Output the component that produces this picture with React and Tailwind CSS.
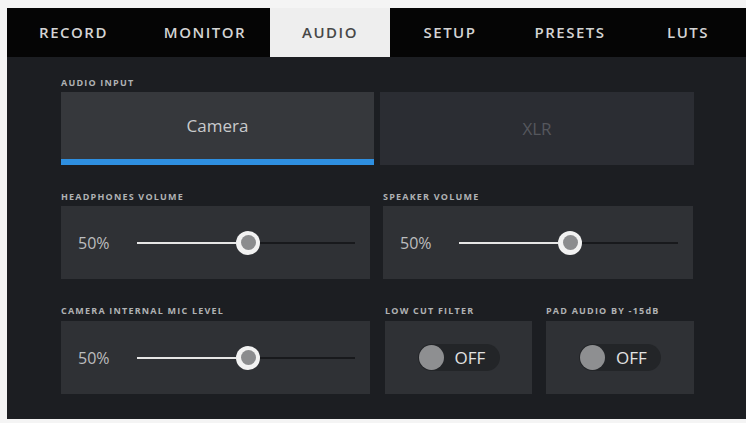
const font = { fontFamily: '"Open Sans", "Liberation Sans", sans-serif' };

const tabs = [
  { name: "RECORD", w: "w-[133px]" },
  { name: "MONITOR", w: "w-[130px]" },
  { name: "AUDIO", w: "w-[120px]", active: true },
  { name: "SETUP", w: "w-[120px]" },
  { name: "PRESETS", w: "w-[120px]" },
  { name: "LUTS", w: "w-[116px]" },
];

function Label({ children }) {
  return (
    <div className="h-[9px] text-[9px] leading-[9px] font-bold tracking-[1.2px] text-[#b0b2b4] whitespace-nowrap">
      {children}
    </div>
  );
}

function Slider({ value }) {
  return (
    <div className="h-[73px] bg-[#2f3135] flex items-center pl-[17px] pr-[15px]">
      <div className="w-[59px] text-[16px] text-[#bcbdbf]">{value}</div>
      <div className="flex-1 flex items-center">
        <div className="w-[99px] h-[2px] bg-[#e6e6e6]" />
        <div className="w-[24px] h-[24px] rounded-full bg-[#f2f2f2] flex items-center justify-center shrink-0">
          <div className="w-[15px] h-[15px] rounded-full bg-[#8b8c8e]" />
        </div>
        <div className="flex-1 h-[2px] bg-[#18191c]" />
      </div>
    </div>
  );
}

function Toggle() {
  return (
    <div className="h-[73px] bg-[#2f3135] flex items-center justify-center">
      <div className="w-[82px] h-[27px] rounded-full bg-[#232528] flex items-center pl-[1px]">
        <div className="w-[25px] h-[25px] rounded-full bg-[#8e8f91]" />
        <span className="ml-[11px] text-[17px] font-medium text-[#e2e2e2]">OFF</span>
      </div>
    </div>
  );
}

export default function App() {
  return (
    <div className="w-[746px] h-[423px] bg-[#f4f4f4] pt-[8px] pl-[7px] overflow-hidden" style={font}>
      <div className="w-[739px] h-[411px] bg-[#1c1e22]">
        {/* Tabs */}
        <div className="flex h-[49px] bg-[#050505]">
          {tabs.map((t) => (
            <div
              key={t.name}
              className={`${t.w} flex items-center justify-center text-[15px] font-semibold tracking-[1.5px] ${
                t.active ? "bg-[#eeeeee] text-[#474747]" : "text-[#d4d4d4]"
              }`}
            >
              {t.name}
            </div>
          ))}
        </div>

        <div className="pl-[54px] pt-[21px] w-[687px]">
          {/* Audio input */}
          <Label>AUDIO INPUT</Label>
          <div className="mt-[5px] flex gap-[6px]">
            <div className="w-[313px] h-[73px] flex flex-col">
              <div className="flex-1 bg-[#36383c] flex items-center justify-center text-[17px] text-[#c9cacc]">
                Camera
              </div>
              <div className="h-[6px] bg-[#2e8fe0]" />
            </div>
            <div className="w-[314px] h-[73px] bg-[#2b2d33] flex items-center justify-center text-[17px] text-[#55575d]">
              XLR
            </div>
          </div>

          {/* Volumes */}
          <div className="mt-[27px] flex gap-[13px]">
            <div className="w-[309px]">
              <Label>HEADPHONES VOLUME</Label>
              <div className="mt-[5px]">
                <Slider value="50%" />
              </div>
            </div>
            <div className="w-[310px]">
              <Label>SPEAKER VOLUME</Label>
              <div className="mt-[5px]">
                <Slider value="50%" />
              </div>
            </div>
          </div>

          {/* Mic level and filters */}
          <div className="mt-[27px] flex">
            <div className="w-[309px]">
              <Label>CAMERA INTERNAL MIC LEVEL</Label>
              <div className="mt-[6px]">
                <Slider value="50%" />
              </div>
            </div>
            <div className="w-[147px] ml-[15px]">
              <Label>LOW CUT FILTER</Label>
              <div className="mt-[6px]">
                <Toggle />
              </div>
            </div>
            <div className="w-[148px] ml-[14px]">
              <Label>PAD AUDIO BY -15dB</Label>
              <div className="mt-[6px]">
                <Toggle />
              </div>
            </div>
          </div>
        </div>
      </div>
    </div>
  );
}
